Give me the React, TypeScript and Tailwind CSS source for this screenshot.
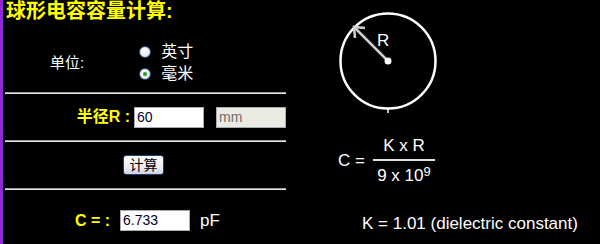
import React from "react";

const FONT = { fontFamily: '"Liberation Sans", "Noto Sans CJK SC", sans-serif' };

function Hr() {
  return (
    <div className="ml-[2px] w-[281px] border-t border-b border-t-[#9c9c9c] border-b-[#e6e6e6] h-[2px]" />
  );
}

function Radio({ checked }: { checked?: boolean }) {
  return (
    <span className="flex h-[12px] w-[12px] items-center justify-center rounded-full border border-[#1c5180] bg-[radial-gradient(circle_at_40%_35%,#ffffff,#dcdcd6)]">
      {checked && <span className="h-[4px] w-[4px] rounded-full bg-[#21a121]" />}
    </span>
  );
}

export default function App() {
  return (
    <div className="flex h-[244px] w-[600px] bg-black text-white overflow-hidden" style={FONT}>
      {/* Left calculator panel */}
      <div className="flex h-[244px] w-[287px] flex-col border-l-[3px] border-[#9028d8]">
        <div className="h-[22px] pl-[3px] text-[20px] font-bold leading-[22px] text-[#ffff00]">
          球形电容容量计算:
        </div>

        <div className="flex h-[70px] items-center pt-[12px]">
          <span className="ml-[47px] text-[15px] leading-[18px]">单位:</span>
          <div className="ml-[55px] flex flex-col gap-[4px]">
            <label className="flex items-center gap-[10px] text-[16px] leading-[18px]">
              <Radio />
              <span>英寸</span>
            </label>
            <label className="flex items-center gap-[10px] text-[16px] leading-[18px]">
              <Radio checked />
              <span>毫米</span>
            </label>
          </div>
        </div>

        <Hr />

        <div className="flex h-[46px] items-center">
          <span className="ml-[69px] w-[58px] text-right text-[16px] font-bold text-[#ffff00]">半径R :</span>
          <div className="ml-[4px] flex h-[21px] w-[70px] items-center border border-[#a5acb2] bg-white pl-[2px] text-[14px] text-[#000033]">
            60
          </div>
          <div className="ml-[12px] flex h-[21px] w-[70px] items-center border border-[#a5acb2] bg-[#ebebe4] pl-[2px] text-[14px] text-[#6d6d6d]">
            mm
          </div>
        </div>

        <Hr />

        <div className="flex h-[46px] items-center">
          <button className="ml-[120px] flex h-[20px] w-[41px] items-center justify-center rounded-[3px] border border-[#1f3f73] bg-[linear-gradient(#ffffff,#e9e9f0_70%,#cfcfe0)] text-[14px] leading-[16px] text-black">
            计算
          </button>
        </div>

        <Hr />

        <div className="flex flex-1 items-start pt-[20px]">
          <span className="ml-[72px] w-[45px] text-[16px] font-bold leading-[21px] text-[#ffff00]">C = :</span>
          <div className="flex h-[21px] w-[70px] items-center border border-[#a5acb2] bg-white pl-[2px] text-[14px] text-[#000033]">
            6.733
          </div>
          <span className="ml-[10px] text-[17px] leading-[21px]">pF</span>
        </div>
      </div>

      {/* Right illustration */}
      <div className="flex flex-1 flex-col">
        <svg className="ml-[43px] block" width="120" height="118" viewBox="0 0 120 118">
          <circle cx="58" cy="61" r="47.5" fill="none" stroke="#ffffff" strokeWidth="2.5" />
          <line x1="58" y1="61" x2="24" y2="27" stroke="#cfcfcf" strokeWidth="2.5" />
          <polyline points="35,28 24,27 25,38" fill="none" stroke="#cfcfcf" strokeWidth="2.5" />
          <circle cx="58" cy="61" r="3.5" fill="#ffffff" />
          <line x1="58" y1="108" x2="58" y2="113" stroke="#ffffff" strokeWidth="1.5" />
          <text x="47" y="46" fill="#ffffff" fontSize="17" fontFamily="Liberation Sans, sans-serif">R</text>
        </svg>

        <div className="mt-[18px] flex items-center">
          <span className="ml-[51px] text-[17px] leading-[18px]">C =</span>
          <div className="ml-[8px] flex w-[62px] flex-col items-center">
            <span className="text-[17px] leading-[20px]">K x R</span>
            <span className="mt-[3px] h-[2px] w-[62px] bg-[#e0e0e0]" />
            <span className="pt-[5px] text-[17px] leading-[20px]">
              9 x 10<sup className="relative top-[-5px] text-[13px]">9</sup>
            </span>
          </div>
        </div>

        <div className="ml-[75px] mt-[29px] text-[17px] leading-[18px]">K = 1.01 (dielectric constant)</div>
      </div>
    </div>
  );
}
